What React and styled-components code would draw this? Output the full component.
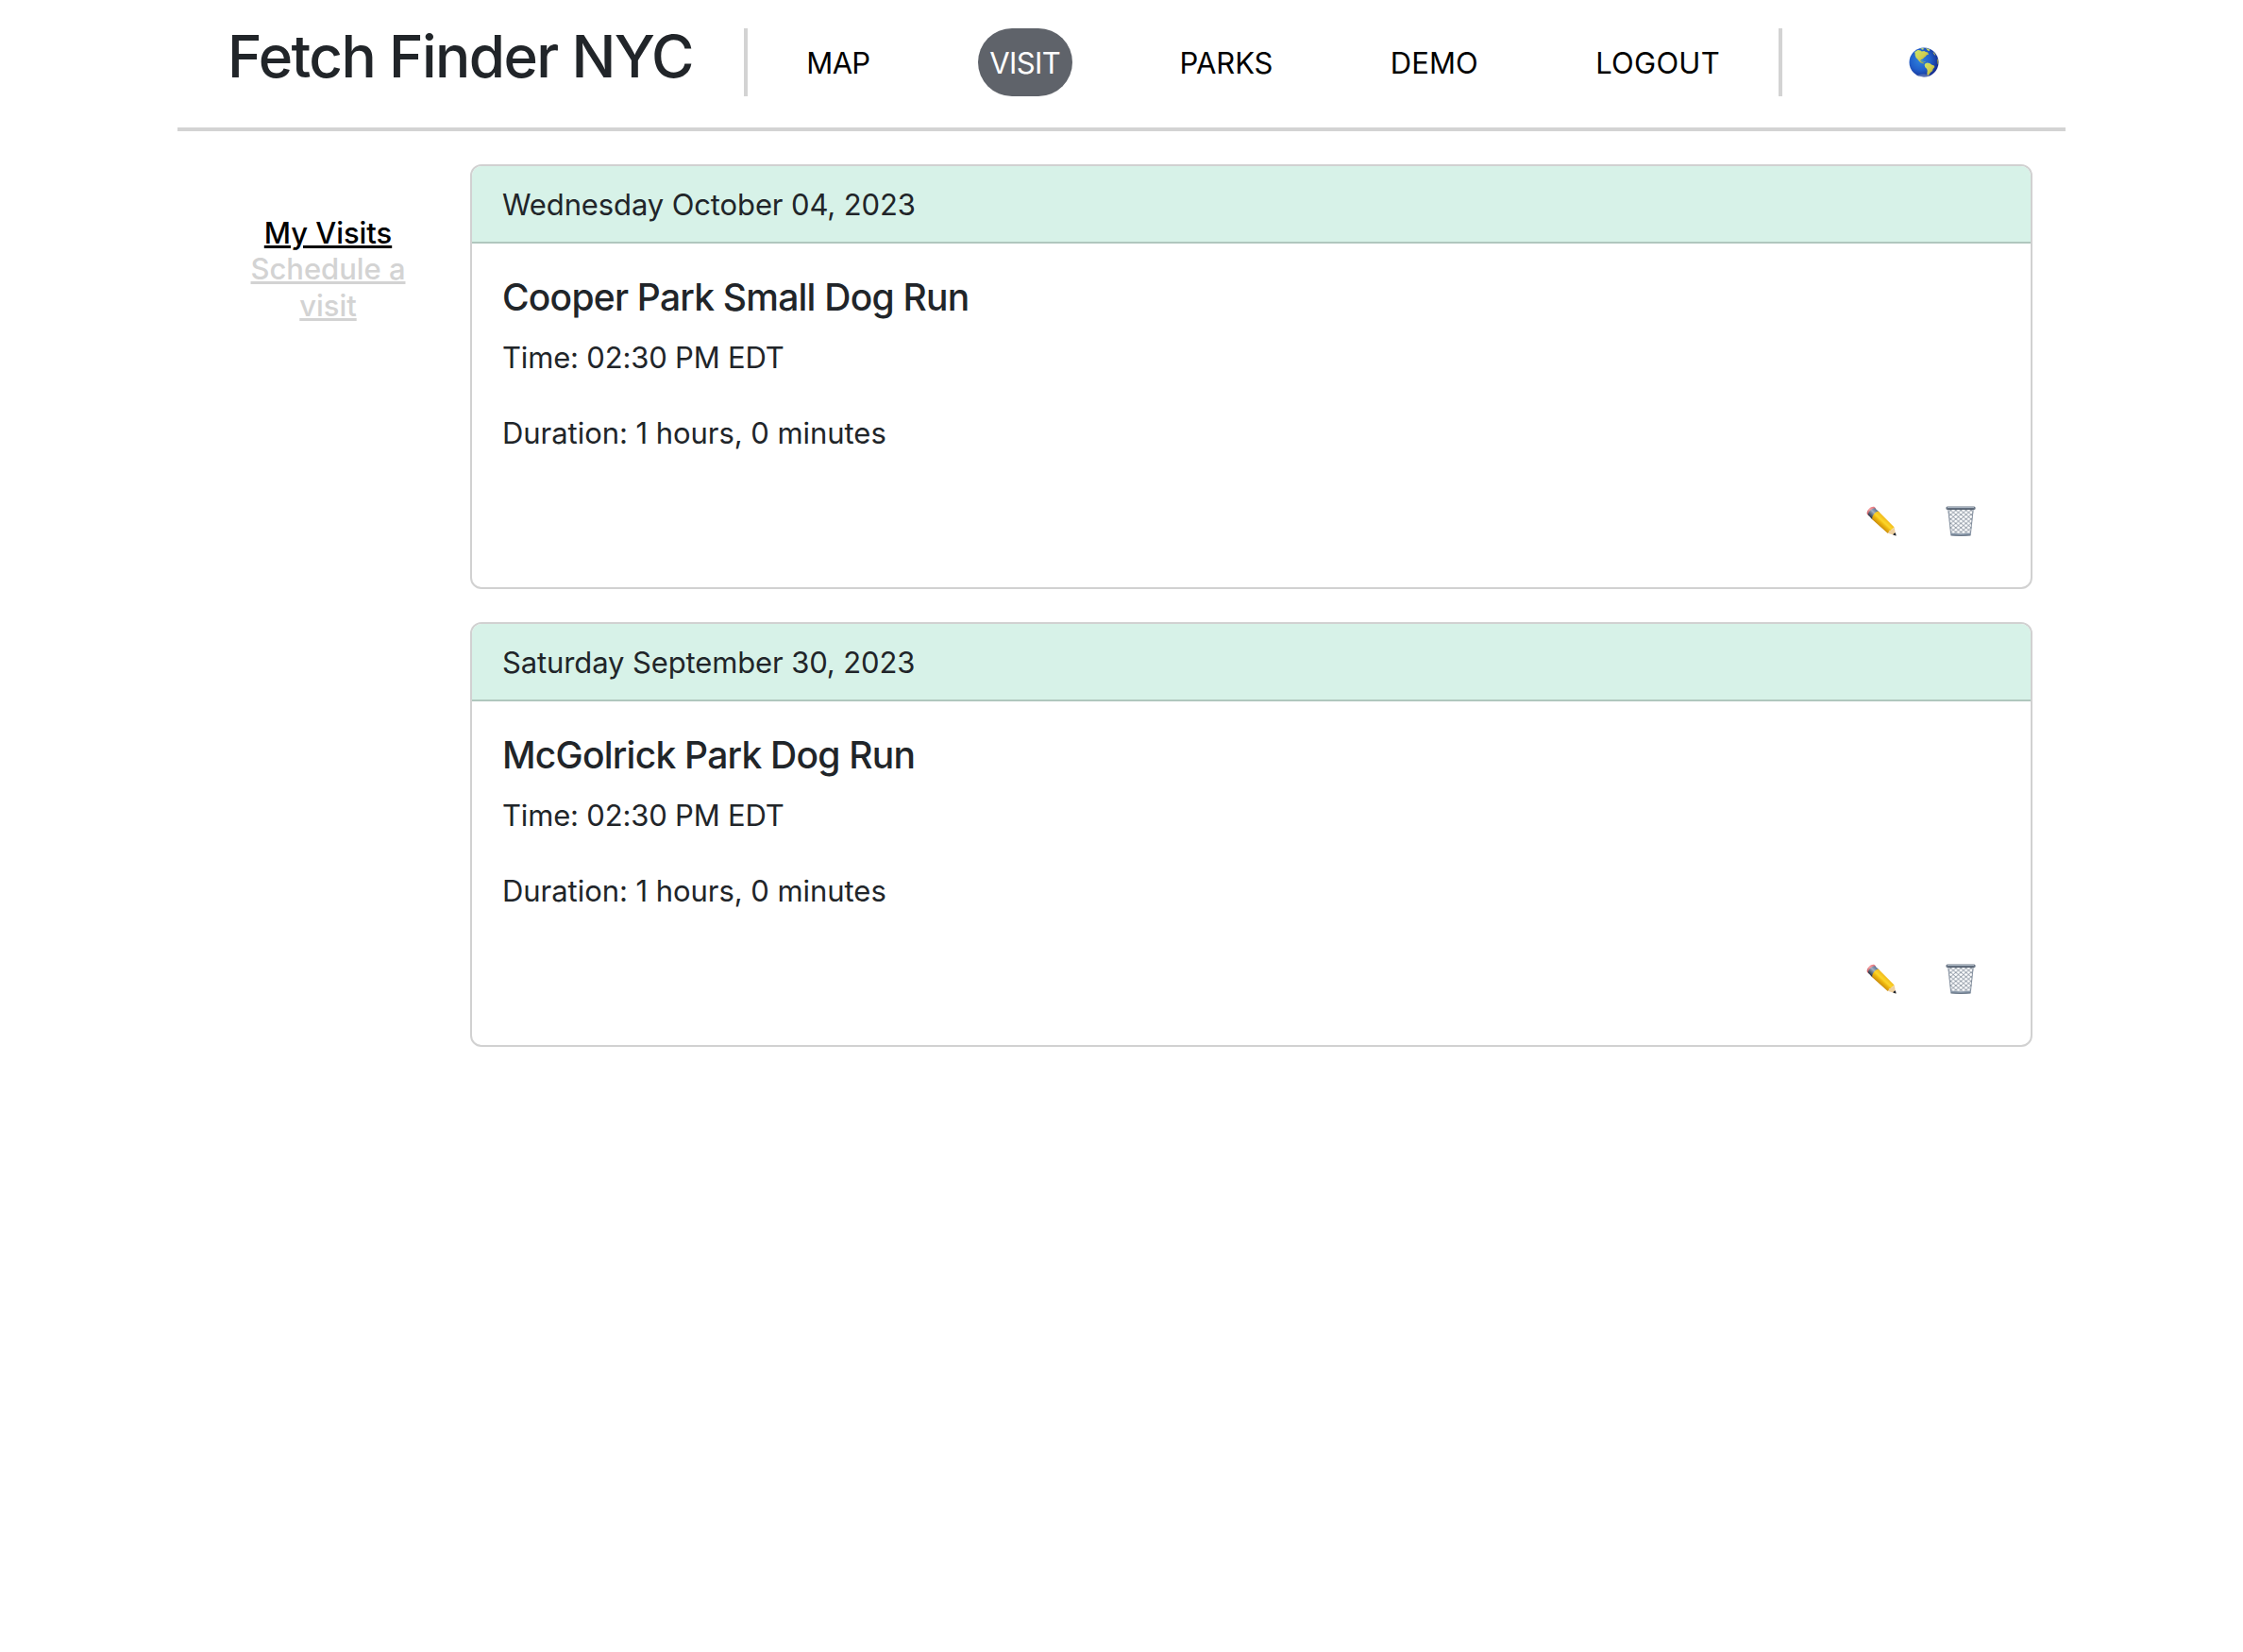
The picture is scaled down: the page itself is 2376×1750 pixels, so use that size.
import React from "react";
import styled, { createGlobalStyle } from "styled-components";

const GlobalStyle = createGlobalStyle`
  *, *::before, *::after { box-sizing: border-box; }
  body {
    margin: 0;
    background: #fff;
    color: #212529;
    font-family: Inter, "Liberation Sans", sans-serif;
    font-size: 31px;
    line-height: 48px;
  }
`;

const Page = styled.div`
  width: 2000px;
  margin: 0 auto;
`;

const Header = styled.header`
  display: flex;
  align-items: flex-start;
  height: 139px;
  border-bottom: 4px solid #d3d3d3;
`;

const Brand = styled.h1`
  flex: 0 0 600px;
  margin: 0;
  padding: 21px 0 0 53px;
  font-size: 62px;
  font-weight: 500;
  line-height: 77px;
  letter-spacing: -1.62px;
  white-space: nowrap;
`;

const Nav = styled.nav`
  flex: 0 0 1100px;
  display: flex;
  justify-content: space-around;
  height: 72px;
  margin-top: 30px;
  border: solid #d3d3d3;
  border-width: 0 4px;
`;

const NavLink = styled.a`
  width: ${(p) => p.$width}px;
  height: 72px;
  padding: 13px 0 11px;
  border-radius: 36px;
  text-align: center;
  text-decoration: none;
  white-space: nowrap;
  letter-spacing: ${(p) => p.$tracking}px;
  color: ${(p) => (p.$active ? "#fff" : "#000")};
  background: ${(p) => (p.$active ? "#5f636a" : "transparent")};
`;

const Language = styled.div`
  flex: 1;
  display: flex;
  justify-content: center;
  padding-top: 50px;
`;

const Main = styled.main`
  display: flex;
  padding-top: 35px;
`;

const Sidebar = styled.aside`
  flex: 0 0 310px;
  display: flex;
  flex-direction: column;
  align-items: center;
  padding: 54px 65px 0 74px;
  font-weight: 500;
  line-height: 38.4px;
  text-align: center;
`;

const SideLink = styled.a`
  color: ${(p) => (p.$active ? "#000" : "#d3d3d3")};
  letter-spacing: -0.05px;
  text-decoration: underline;
  text-decoration-thickness: 3px;
  text-underline-offset: 2px;
`;

const Visits = styled.section`
  flex: 0 0 1655px;
  display: flex;
  flex-direction: column;
  gap: 35px;
`;

const Card = styled.article`
  height: 450px;
  border: 2px solid #d1d1d1;
  border-radius: 12px;
  overflow: hidden;
  background: #fff;
`;

const CardHeader = styled.div`
  height: 82px;
  padding: 17px 32px 15px;
  border-bottom: 2px solid #b0c7be;
  background: #d7f2e8;
  letter-spacing: -0.12px;
`;

const CardBody = styled.div`
  display: flex;
  flex-direction: column;
  padding: 33px 32px 0;
`;

const ParkName = styled.h2`
  margin: 0 0 16px;
  font-size: 39px;
  font-weight: 500;
  line-height: 48px;
  letter-spacing: -0.77px;
`;

const Detail = styled.p`
  margin: 0 0 32px;
  letter-spacing: ${(p) => p.$tracking}px;
`;

const Actions = styled.div`
  display: flex;
  justify-content: flex-end;
  gap: 52px;
  margin-top: 21px;
  padding-right: 26px;
`;

const IconButton = styled.button`
  display: block;
  width: 32px;
  height: 32px;
  padding: 0;
  border: 0;
  background: none;

  svg { display: block; }
`;

function Globe() {
  return (
    <svg width="32" height="32" viewBox="0 0 32 32">
      <defs>
        <radialGradient id="ocean" cx="38%" cy="42%" r="62%">
          <stop offset="0" stopColor="#2e83dc" />
          <stop offset="0.55" stopColor="#2160cb" />
          <stop offset="1" stopColor="#182f91" />
        </radialGradient>
        <linearGradient id="land" x1="0" x2="1" y1="0" y2="1">
          <stop offset="0" stopColor="#c9e66a" />
          <stop offset="0.5" stopColor="#d2cf50" />
          <stop offset="1" stopColor="#9b9b32" />
        </linearGradient>
        <clipPath id="sphere"><circle cx="16" cy="16" r="15.5" /></clipPath>
      </defs>
      <circle cx="16" cy="16" r="15.5" fill="url(#ocean)" />
      <g clipPath="url(#sphere)" fill="url(#land)">
        <path d="M6 5.2 9.5 3l3 .4 1.2 1 2.6-.5 1.6 1.2 2.2.4.9 2.2-2 .6-1.4 1.8-1.5.8-1.2 1.6-1.800.5-.8 1.6 1.300 1.2 1.800.6 1 1-1.700-.2-2.400-.9-1.600-1.700-1.600-2.100-1.400-1.300-1-2.500-.2-2.600Z" />
        <path d="m12 1.800 2.600-.8 1.700.7-1.400 1ZM18 1l3.500 1 .8 1.300-1.200 1-1.600-1.400ZM25.500 5.200l1.300.6 1.700 2.800-1.300-.3ZM30 12l1.500 2v5l-1-1.500Z" />
        <path d="m17.200 17.400 2-.9 3 .5 1.800 1.600 2.800 1 .6 1.400-1.700 2-.7 2.300-2 1.400-1.500 2.200-1.600 1.300-.6-2.100.4-3-.6-2.100-1.800-1.800-.7-2.100Z" />
      </g>
      <path d="m12.500 13.600 2.700 1.200 2 .4 1 .7-1.800-.2-3-.8Z" fill="#7fb47d" />
      <path d="M8 30.400Q16 26.500 24 30.400Q16 33 8 30.400Z" fill="#a6b4cf" opacity=".4" clipPath="url(#sphere)" />
    </svg>
  );
}

function Pencil() {
  return (
    <svg width="32" height="32" viewBox="0 0 32 32">
      <defs>
        <linearGradient id="wood" gradientUnits="userSpaceOnUse" x1="19.5" y1="12.5" x2="12.5" y2="20">
          <stop offset="0" stopColor="#f2bc1e" />
          <stop offset="0.4" stopColor="#fcd62b" />
          <stop offset="0.62" stopColor="#eeb70f" />
          <stop offset="1" stopColor="#c98b0b" />
        </linearGradient>
        <linearGradient id="ferrule" gradientUnits="userSpaceOnUse" x1="12" y1="5.5" x2="5" y2="12.5">
          <stop offset="0" stopColor="#5e7693" />
          <stop offset="0.4" stopColor="#a0b0c3" />
          <stop offset="1" stopColor="#273344" />
        </linearGradient>
        <linearGradient id="rubber" x1="1" y1="0" x2="0" y2="1">
          <stop offset="0" stopColor="#e26b75" />
          <stop offset="0.5" stopColor="#f59da0" />
          <stop offset="1" stopColor="#ad4149" />
        </linearGradient>
      </defs>
      <path d="M.9 8.7C-.5 5.2 4.7-.3 8.6 1l1.5 1.5-7.5 8Z" fill="url(#rubber)" />
      <path d="m9.1 2.2 4.6 4.4-7.5 7.6-4.2-4.8c-.2-3 3.9-7.3 7.1-7.2Z" fill="url(#ferrule)" />
      <path d="M12.7 5.6 29.6 22.4l-6.9 6.7L6.2 14.2c-.3-3.5 3.1-8 6.5-8.6Z" fill="url(#wood)" />
      <path d="m29.6 22.3 1.8 9.1-8.9-2.6c1.2-.7 1.5-1.6 1.4-2.6 1.2.1 2.2-.3 2.7-1.4 1.3 0 2.5-.9 3-2.5Z" fill="#eed0a0" />
      <path d="m31 28.5.6 3.1-3.2-.8c.2-1.5 1.2-2.4 2.6-2.3Z" fill="#242933" />
    </svg>
  );
}

function Wastebasket() {
  return (
    <svg width="32" height="32" viewBox="0 0 32 32">
      <defs>
        <pattern id="mesh" width="5.4" height="4.6" patternUnits="userSpaceOnUse">
          <path d="M-.2-.2 5.6 4.8M5.6-.2-.2 4.8" stroke="#7c8795" strokeWidth=".85" fill="none" />
        </pattern>
      </defs>
      <path d="M2.300 3.500h27.400L26.700 29H5.300Z" fill="#fbfcfd" />
      <path d="M2.300 3.500h27.400L26.700 29H5.300Z" fill="url(#mesh)" />
      <path d="m2.800 3.500 2.800 26M29.200 3.500l-2.800 26" stroke="#7d8998" strokeWidth=".9" />
      <path d="M5 28.500q11 1.500 22 0l-.5 2.800q-10.500 1-21 0Z" fill="#8b9aab" />
      <path d="M5.500 30.900q10.500 1 21 0" stroke="#566272" strokeWidth=".8" fill="none" />
      <rect x=".4" y=".6" width="31.200" height="3.300" rx="1.500" fill="#6b7786" />
      <path d="M2 1.500h28" stroke="#b3bec9" strokeWidth=".9" />
      <path d="M2.500 3.300h27" stroke="#4b5563" strokeWidth=".7" />
    </svg>
  );
}

const links = [
  { label: "MAP", width: 88, tracking: -0.7 },
  { label: "VISIT", width: 100, tracking: -0.6, active: true },
  { label: "PARKS", width: 119, tracking: -0.1 },
  { label: "DEMO", width: 114, tracking: 0.1 },
  { label: "LOGOUT", width: 152, tracking: 0.24 },
];

const visits = [
  { date: "Wednesday October 04, 2023", park: "Cooper Park Small Dog Run" },
  { date: "Saturday September 30, 2023", park: "McGolrick Park Dog Run" },
];

function VisitCard({ date, park }) {
  return (
    <Card>
      <CardHeader>{date}</CardHeader>
      <CardBody>
        <ParkName>{park}</ParkName>
        <Detail $tracking={-0.18}>Time: 02:30 PM EDT</Detail>
        <Detail $tracking={-0.05}>Duration: 1 hours, 0 minutes</Detail>
        <Actions>
          <IconButton aria-label="Edit"><Pencil /></IconButton>
          <IconButton aria-label="Delete"><Wastebasket /></IconButton>
        </Actions>
      </CardBody>
    </Card>
  );
}

export default function App() {
  return (
    <>
      <GlobalStyle />
      <Page>
        <Header>
          <Brand>Fetch Finder NYC</Brand>
          <Nav>
            {links.map((l) => (
              <NavLink key={l.label} $width={l.width} $tracking={l.tracking} $active={l.active}>
                {l.label}
              </NavLink>
            ))}
          </Nav>
          <Language><Globe /></Language>
        </Header>
        <Main>
          <Sidebar>
            <SideLink $active>My Visits</SideLink>
            <SideLink>Schedule a visit</SideLink>
          </Sidebar>
          <Visits>
            {visits.map((v) => <VisitCard key={v.date} {...v} />)}
          </Visits>
        </Main>
      </Page>
    </>
  );
}
